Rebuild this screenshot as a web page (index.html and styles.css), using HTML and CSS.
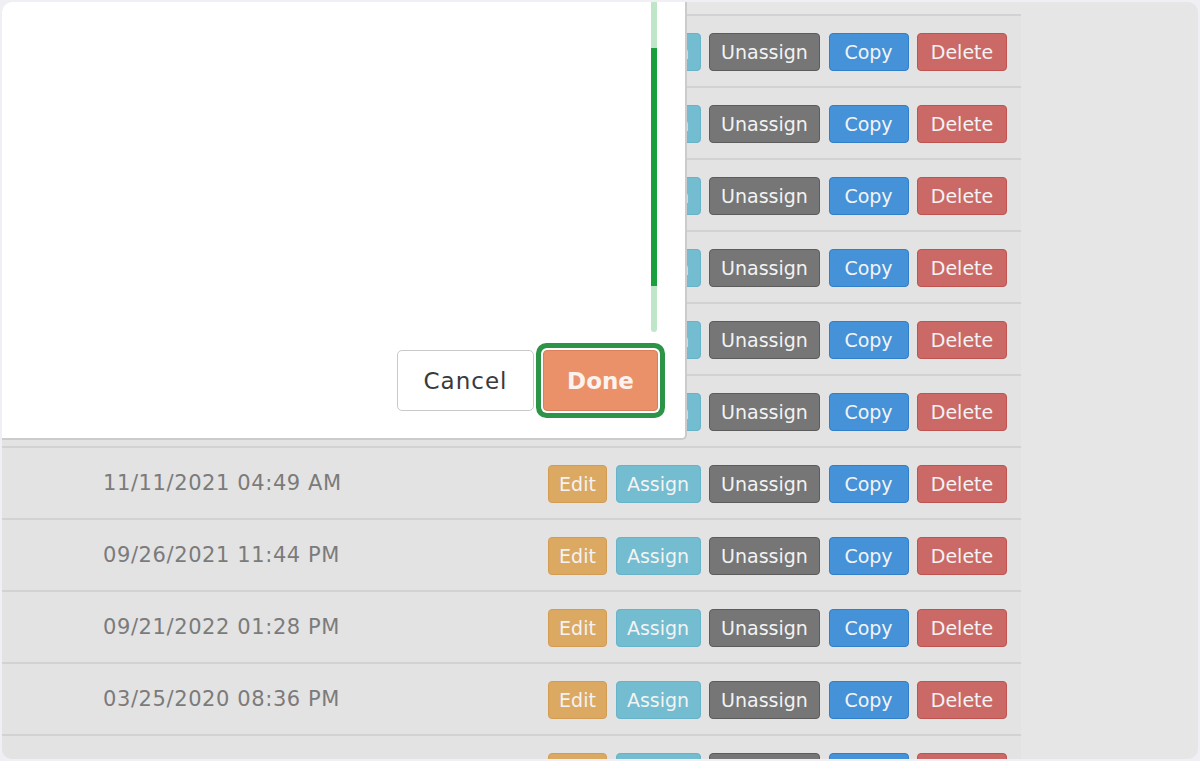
FILE: index.html
```html
<!DOCTYPE html>
<html>
<head>
<meta charset="utf-8">
<link rel="stylesheet" href="styles.css">
</head>
<body>
<div class="screen">
  <div class="table">
    <div class="row"><div class="date">06/03/2021 10:22 AM</div><div class="actions"><span class="btn edit">Edit</span><span class="btn assign">Assign</span><span class="btn unassign">Unassign</span><span class="btn copy">Copy</span><span class="btn delete">Delete</span></div></div>
    <div class="row"><div class="date">01/19/2022 03:05 PM</div><div class="actions"><span class="btn edit">Edit</span><span class="btn assign">Assign</span><span class="btn unassign">Unassign</span><span class="btn copy">Copy</span><span class="btn delete">Delete</span></div></div>
    <div class="row"><div class="date">07/07/2020 06:41 PM</div><div class="actions"><span class="btn edit">Edit</span><span class="btn assign">Assign</span><span class="btn unassign">Unassign</span><span class="btn copy">Copy</span><span class="btn delete">Delete</span></div></div>
    <div class="row"><div class="date">12/01/2021 08:17 AM</div><div class="actions"><span class="btn edit">Edit</span><span class="btn assign">Assign</span><span class="btn unassign">Unassign</span><span class="btn copy">Copy</span><span class="btn delete">Delete</span></div></div>
    <div class="row"><div class="date">04/28/2022 11:30 AM</div><div class="actions"><span class="btn edit">Edit</span><span class="btn assign">Assign</span><span class="btn unassign">Unassign</span><span class="btn copy">Copy</span><span class="btn delete">Delete</span></div></div>
    <div class="row"><div class="date">10/10/2020 02:55 PM</div><div class="actions"><span class="btn edit">Edit</span><span class="btn assign">Assign</span><span class="btn unassign">Unassign</span><span class="btn copy">Copy</span><span class="btn delete">Delete</span></div></div>
    <div class="row"><div class="date">11/11/2021 04:49 AM</div><div class="actions"><span class="btn edit">Edit</span><span class="btn assign">Assign</span><span class="btn unassign">Unassign</span><span class="btn copy">Copy</span><span class="btn delete">Delete</span></div></div>
    <div class="row"><div class="date">09/26/2021 11:44 PM</div><div class="actions"><span class="btn edit">Edit</span><span class="btn assign">Assign</span><span class="btn unassign">Unassign</span><span class="btn copy">Copy</span><span class="btn delete">Delete</span></div></div>
    <div class="row"><div class="date">09/21/2022 01:28 PM</div><div class="actions"><span class="btn edit">Edit</span><span class="btn assign">Assign</span><span class="btn unassign">Unassign</span><span class="btn copy">Copy</span><span class="btn delete">Delete</span></div></div>
    <div class="row"><div class="date">03/25/2020 08:36 PM</div><div class="actions"><span class="btn edit">Edit</span><span class="btn assign">Assign</span><span class="btn unassign">Unassign</span><span class="btn copy">Copy</span><span class="btn delete">Delete</span></div></div>
    <div class="row"><div class="date">05/02/2022 05:13 AM</div><div class="actions"><span class="btn edit">Edit</span><span class="btn assign">Assign</span><span class="btn unassign">Unassign</span><span class="btn copy">Copy</span><span class="btn delete">Delete</span></div></div>
  </div>

  <div class="modal">
    <div class="modal-body">
      <div class="scroll-track"><div class="scroll-thumb"></div></div>
    </div>
    <div class="modal-footer">
      <button class="mbtn cancel">Cancel</button>
      <button class="mbtn done">Done</button>
    </div>
  </div>
</div>
</body>
</html>
```

FILE: styles.css
```css
html, body {
  margin: 0;
  padding: 0;
}
body {
  background: #efeff4;
  width: 1200px;
  height: 761px;
  overflow: hidden;
  font-family: "DejaVu Sans", "Liberation Sans", sans-serif;
}
.screen {
  position: relative;
  margin: 2px;
  width: 1196px;
  height: 757px;
  border-radius: 10px;
  background: #e6e6e6;
  overflow: hidden;
}
.table {
  width: 1019px;
  margin-top: 12px;
  border-top: 2px solid #d2d2d2;
}
.row {
  height: 70px;
  border-bottom: 2px solid #d2d2d2;
  background: #e3e3e3;
  display: flex;
  align-items: center;
}
.date {
  width: 445px;
  padding-left: 101px;
  font-size: 21px;
  letter-spacing: 0.6px;
  color: #7b7b7b;
  white-space: nowrap;
}
.actions {
  display: flex;
  gap: 8.5px;
  padding-top: 1px;
}
.btn {
  box-sizing: border-box;
  height: 38px;
  display: flex;
  align-items: center;
  justify-content: center;
  border-radius: 4px;
  border: 1px solid;
  color: #f3f3f3;
  font-size: 19px;
}
.edit { width: 59px; background: #dca963; border-color: #d49c52; }
.assign { width: 85px; background: #74bcd0; border-color: #67b3c9; }
.unassign { width: 111px; background: #767676; border-color: #5c5c5c; }
.copy { width: 80px; background: #4592d8; border-color: #2f7fcb; }
.delete { width: 90px; background: #cb6966; border-color: #c2524f; }

.modal {
  position: absolute;
  left: 0;
  top: 0;
  width: 683px;
  height: 436px;
  background: #ffffff;
  border-right: 2px solid #cbcbcb;
  border-bottom: 2px solid #cbcbcb;
  border-bottom-right-radius: 5px;
  display: flex;
  flex-direction: column;
}
.modal-body {
  height: 330px;
  display: flex;
  justify-content: flex-end;
  padding-right: 28px;
}
.scroll-track {
  width: 6px;
  height: 330px;
  background: #c0e6ca;
  border-radius: 0 0 3px 3px;
}
.scroll-thumb {
  margin-top: 46px;
  height: 238px;
  background: #17a03b;
}
.modal-footer {
  display: flex;
  justify-content: flex-end;
  align-items: center;
  gap: 9px;
  padding-top: 18px;
  padding-right: 27px;
}
.mbtn {
  box-sizing: border-box;
  height: 61px;
  border-radius: 5px;
  font-family: "DejaVu Sans", "Liberation Sans", sans-serif;
  font-size: 23px;
  letter-spacing: 1px;
  padding: 0;
}
.cancel {
  width: 137px;
  background: #ffffff;
  border: 1px solid #c9c9c9;
  color: #3a3a3a;
}
.done {
  width: 115px;
  background: #ea916a;
  border: 1px solid #d8805b;
  color: #fdf3ee;
  font-weight: bold;
  letter-spacing: 0;
  box-shadow: 0 0 0 2px #ffffff, 0 0 0 7px #2b9447;
  border-radius: 4px;
}
```
